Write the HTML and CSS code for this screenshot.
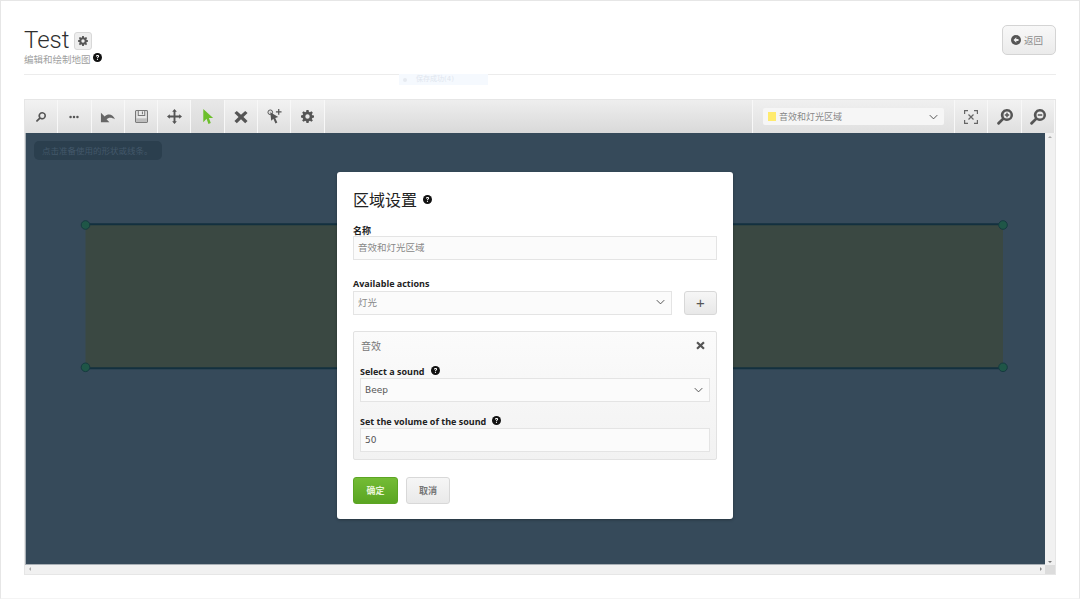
FILE: index.html
```html
<!DOCTYPE html>
<html lang="zh">
<head>
<meta charset="utf-8">
<title>Test</title>
<link rel="stylesheet" href="styles.css">
</head>
<body>
<svg class="defs" width="0" height="0">
  <defs>
    <symbol id="help" viewBox="0 0 16 16"><circle cx="8" cy="8" r="8" fill="#111"/><path d="M5.2 6.2C5.3 4.5 6.5 3.6 8.1 3.6c1.700 0 2.800 1 2.800 2.300 0 1.200-.7 1.700-1.500 2.300-.6.4-.8.700-.8 1.300H7c0-1.100.3-1.700 1.100-2.300.6-.4.9-.7.9-1.200 0-.5-.4-.8-.9-.8-.6 0-1 .4-1.100 1z" fill="#fff"/><rect x="7" y="10.500" width="1.800" height="1.800" fill="#fff"/></symbol>
    <symbol id="gear" viewBox="0 0 16 16"><path fill="#555" fill-rule="evenodd" d="M6.700 0h2.600l.4 2.200 1.300.5L12.800 1.500l1.800 1.800-1.300 1.800.6 1.300 2.100.3v2.600l-2.100.4-.6 1.300 1.300 1.800-1.800 1.800-1.800-1.300-1.300.6-.4 2.100H6.700l-.4-2.100-1.300-.6-1.800 1.300-1.800-1.800 1.300-1.800-.6-1.300L0 9.300V6.700l2.100-.4.6-1.300L1.400 3.300l1.800-1.800L5 2.700l1.300-.5zM8 5.300a2.700 2.700 0 1 0 0 5.400 2.700 2.700 0 0 0 0-5.400z"/></symbol>
    <symbol id="mag" viewBox="0 0 16 16"><path fill="#555" fill-rule="evenodd" d="M10 0a6 6 0 1 1-3.200 11.100L2.600 15.300a1.400 1.400 0 0 1-2-2l4.200-4.100A6 6 0 0 1 10 0zm0 2.500a3.500 3.500 0 1 0 0 7 3.500 3.500 0 0 0 0-7z"/></symbol>
    <symbol id="cross" viewBox="0 0 16 16"><path fill="#555" d="M3.200 1 8 5.500 12.800 1 15.500 3.500 10.800 8l4.700 4.500-2.700 2.500L8 10.500 3.200 15 .5 12.500 5.200 8 .5 3.500z"/></symbol>
    <symbol id="chev" viewBox="0 0 12 7"><path fill="none" stroke="#444" stroke-width="1.200" d="M1 1l5 5 5-5"/></symbol>
  </defs>
</svg>
<div class="page">
  <header class="head">
    <div class="head-text">
      <div class="title-row">
        <h1 class="title">Test</h1>
        <span class="gear-btn"><svg class="i12"><use href="#gear"/></svg></span>
      </div>
      <div class="sub-row">
        <span class="sub">编辑和绘制地图</span>
        <svg class="i9 up"><use href="#help"/></svg>
      </div>
    </div>
    <button class="back"><svg class="i10" viewBox="0 0 16 16"><circle cx="8" cy="8" r="8" fill="#555"/><path d="M8.500 3.500 4 8l4.500 4.500V9.700H12V6.300H8.500z" fill="#eee"/></svg>返回</button>
  </header>
  <div class="rule"></div>
  <div class="toast"><span class="toast-dot"></span>保存成功(4)</div>

  <section class="editor">
    <div class="toolbar">
      <button class="tool"><svg class="i11"><use href="#mag"/></svg></button>
      <button class="tool"><svg class="i12" viewBox="0 0 16 16"><circle cx="2.500" cy="8" r="2" fill="#555"/><circle cx="8" cy="8" r="2" fill="#555"/><circle cx="13.500" cy="8" r="2" fill="#555"/></svg></button>
      <button class="tool"><svg class="i15" viewBox="0 0 16 16"><path fill="#666" d="M1 4v10h9l-3-3c2-2 5-2.500 9 0-2-5-7-7-11-3z"/></svg></button>
      <button class="tool"><svg class="i13" viewBox="0 0 14 14"><rect x=".6" y=".6" width="12.800" height="12.800" rx="1" fill="none" stroke="#777" stroke-width="1.200"/><rect x="1.200" y="9" width="11.600" height="4" fill="#bdbdbd"/><path fill="none" stroke="#777" stroke-width="1.100" d="M3.500 1v5h7V1M8 1.500v3"/></svg></button>
      <button class="tool"><svg class="i15" viewBox="0 0 16 16"><path fill="#555" d="M8 0l2.500 3H9v4h4V5.500L16 8l-3 2.500V9H9v4h1.500L8 16l-2.500-3H7V9H3v1.500L0 8l3-2.500V7h4V3H5.500z"/></svg></button>
      <button class="tool tool-on"><svg class="i15" viewBox="0 0 16 16"><path fill="#6cbf2b" d="M3.500 0 14 9.500H9.500L11.500 15l-2.500 1-2-5.500L3.500 14z"/></svg></button>
      <button class="tool"><svg class="i14"><use href="#cross"/></svg></button>
      <button class="tool"><svg class="i15" viewBox="0 0 16 16"><circle cx="3.500" cy="3.500" r="2.500" fill="#ddd" stroke="#555" stroke-width="1"/><path fill="#555" d="M3.500 3.500 12 8.500 8.800 9.500 11 14.500 9 15.500 6.800 10.500 4.500 12.500z"/><path fill="none" stroke="#555" stroke-width="1.300" d="M12.500 0v6M9.500 3h6"/></svg></button>
      <button class="tool"><svg class="i13"><use href="#gear"/></svg></button>
      <div class="tool-fill"></div>
      <div class="layer-wrap">
        <div class="layer">
          <span class="swatch"></span>
          <span class="layer-name">音效和灯光区域</span>
          <svg class="chev"><use href="#chev"/></svg>
        </div>
      </div>
      <button class="tool"><svg class="i14" viewBox="0 0 14 14"><path fill="none" stroke="#666" stroke-width="1.200" d="M.6 4V.6H4M10 .6h3.400V4M13.400 10v3.400H10M4 13.400H.6V10"/><path fill="none" stroke="#666" stroke-width="1.200" d="M4.500 4.500l5 5M9.500 4.500l-5 5"/></svg></button>
      <button class="tool"><svg class="i16" viewBox="0 0 16 16"><use href="#mag"/><path stroke="#555" stroke-width="1.400" d="M7.800 6h4.400M10 3.800v4.400"/></svg></button>
      <button class="tool"><svg class="i16" viewBox="0 0 16 16"><use href="#mag"/><path stroke="#555" stroke-width="1.500" d="M7.800 6h4.400"/></svg></button>
    </div>
    <div class="viewport">
      <div class="canvas">
        <div class="hint">点击准备使用的形状或线条。</div>
        <svg class="shape" viewBox="0 0 940 160">
          <rect x="9.500" y="11.300" width="917.500" height="144" fill="#3a4842"/>
          <path d="M9.500 11.300H927M9.500 155.300H927" stroke="#13303f" stroke-width="2"/>
          <circle cx="9.500" cy="12" r="4.300" fill="#1f5647" stroke="#163a40"/>
          <circle cx="927" cy="12" r="4.300" fill="#1f5647" stroke="#163a40"/>
          <circle cx="9.500" cy="154.300" r="4.300" fill="#1f5647" stroke="#163a40"/>
          <circle cx="927" cy="154.300" r="4.300" fill="#1f5647" stroke="#163a40"/>
        </svg>
      </div>
      <div class="vbar"><span class="arrow-up"></span><span class="arrow-down"></span></div>
      <div class="hbar"><span class="arrow-left"></span><span class="arrow-right"></span></div>
      <div class="corner"></div>
    </div>
  </section>

  <div class="modal">
    <h2 class="modal-title">区域设置 <svg class="i9"><use href="#help"/></svg></h2>
    <label class="lbl lbl-name">名称</label>
    <div class="field cjk">音效和灯光区域</div>
    <label class="lbl lbl-actions">Available actions</label>
    <div class="add-row">
      <div class="field select cjk"><span>灯光</span><svg class="chev"><use href="#chev"/></svg></div>
      <button class="plus">+</button>
    </div>
    <div class="action">
      <div class="action-head"><span>音效</span><svg class="i9x"><use href="#cross"/></svg></div>
      <label class="lbl lbl-sound">Select a sound <svg class="i9 up"><use href="#help"/></svg></label>
      <div class="field select latin"><span>Beep</span><svg class="chev"><use href="#chev"/></svg></div>
      <label class="lbl lbl-vol">Set the volume of the sound <svg class="i9 up"><use href="#help"/></svg></label>
      <div class="field latin">50</div>
    </div>
    <div class="actions">
      <button class="ok">确定</button>
      <button class="cancel">取消</button>
    </div>
  </div>
</div>
</body>
</html>
```
FILE: styles.css
```css
* { box-sizing: border-box; }
html, body { margin: 0; padding: 0; }
body {
  width: 1080px;
  height: 599px;
  overflow: hidden;
  background: #fff;
  font-family: "DejaVu Sans", "Noto Sans CJK SC", sans-serif;
  color: #333;
}
.defs { position: absolute; }
svg { display: block; overflow: visible; flex: none; }
.page {
  position: relative;
  height: 599px;
  border: 1px solid #e6e6e6;
  border-bottom-color: #f4f4f4;
  padding: 0 23px 0 23px;
}
.head { display: flex; justify-content: space-between; align-items: flex-start; padding-top: 24px; height: 73px; }
.title-row { display: flex; align-items: center; gap: 5px; height: 30px; }
.title { margin: 0; font: 300 24px/30px Roboto, sans-serif; color: #2f2f2f; }
.gear-btn {
  width: 18px; height: 18px; margin-top: 2px; display: flex; align-items: center; justify-content: center;
  border: 1px solid #d8d8d8; border-radius: 3px; background: #eee;
}
.i12 { width: 10px; height: 10px; }
.i9 { width: 9px; height: 9px; display: inline-block; }
.up { margin-bottom: 3px; }
.i9x { width: 9px; height: 9px; }
.i10 { width: 10px; height: 10px; }
.i11 { width: 10px; height: 10px; }
.i13 { width: 13px; height: 13px; }
.i14 { width: 14px; height: 14px; }
.i15 { width: 15px; height: 15px; }
.i16 { width: 16px; height: 16px; }
.sub-row { display: flex; align-items: center; gap: 2px; margin-top: -2px; height: 12px; }
.sub { font: 9.500px/12px "Noto Sans CJK SC", sans-serif; color: #a0a0a0; }
.back {
  width: 54px; height: 30px; margin-right: 0; display: flex; align-items: center; padding: 0 0 0 8px; gap: 3px;
  border: 1px solid #d4d4d4; border-radius: 5px; background: linear-gradient(#f8f8f8, #ebebeb);
  font: 9.500px "Noto Sans CJK SC", sans-serif; color: #8a8a8a;
}
.rule { height: 1px; background: #ececec; }
.toast {
  position: absolute; left: 398px; top: 73px; width: 89px; height: 11px; display: flex; align-items: center; padding-left: 4px;
  background: #f5f9fe; color: #e0e6ee; font-size: 7px; line-height: 11px;
}
.toast-dot { width: 4px; height: 4px; border-radius: 50%; background: #e6eaf0; margin-right: 9px; }
.editor { margin-top: 24px; }
.toolbar {
  display: flex; height: 34px; background: linear-gradient(#f1f1f1, #dedede);
  border: 1px solid #e6e6e6; border-bottom: 0;
}
.tool {
  width: 33.300px; flex: none; height: 33px; padding: 0; border: 0; border-right: 1px solid #f8f8f8;
  background: linear-gradient(#f2f2f2, #dfdfdf);
  display: flex; align-items: center; justify-content: center;
}
.tool-on { background: linear-gradient(#e8e8e8, #dadada); }
.tool-fill { flex: 1; background: linear-gradient(#eeeeee, #d9d9d9); }
.layer-wrap {
  width: 203px; height: 33px; flex: none; padding: 8px 10px 0 10px;
  border-left: 1px solid #f8f8f8; border-right: 1px solid #f8f8f8;
  background: linear-gradient(#f0f0f0, #e0e0e0);
}
.layer {
  height: 17px; display: flex; align-items: center; padding: 0 6px 0 5px;
  background: #f6f6f6; border-radius: 2px; font: 9px "Noto Sans CJK SC", sans-serif; color: #888;
}
.swatch { width: 8px; height: 9px; background: #ffeb6e; margin-right: 3px; }
.layer-name { flex: 1; }
.chev { width: 9px; height: 6px; }
.viewport {
  display: grid; grid-template-columns: 1fr 10px; grid-template-rows: 432px 9px;
  border-left: 1px solid #e6e6e6; border-right: 1px solid #e6e6e6; border-bottom: 1px solid #e6e6e6;
  background: #f1f1f1;
}
.canvas {
  position: relative; background: #364a5a; border-left: 1px solid #a9b0b6; border-bottom: 1px solid #a9b0b6; overflow: hidden;
}
.hint {
  position: absolute; left: 8px; top: 8px; width: 128px; height: 19px; padding-left: 8px;
  background: #2b3f4e; border-radius: 5px; font: 8.500px/18px "Noto Sans CJK SC", sans-serif; color: #43586a;
}
.shape { position: absolute; left: 50px; top: 80px; width: 940px; height: 160px; }
.vbar { position: relative; background: #f1f1f1; }
.hbar { position: relative; background: #f1f1f1; }
.corner { background: #dcdcdc; }
.arrow-up, .arrow-down, .arrow-left, .arrow-right { position: absolute; width: 0; height: 0; border: 2px solid transparent; }
.arrow-up { left: 3px; top: 1px; border-bottom-color: #aaa; }
.arrow-down { left: 3px; bottom: 0; border-top-color: #777; }
.arrow-left { left: 2px; top: 2px; border-right-color: #aaa; }
.arrow-right { right: 1px; top: 2px; border-left-color: #888; }

.modal {
  position: absolute; left: 336px; top: 171px; width: 396px; height: 347px;
  padding: 16px 16px 0 16px; background: #fff; border-radius: 3px; box-shadow: 0 1px 3px rgba(0,0,0,.3);
}
.modal-title { margin: 0; height: 22px; display: flex; align-items: center; gap: 6px; font: 400 16px/22px "Noto Sans CJK SC", sans-serif; color: #222; }
.lbl { display: flex; align-items: center; font: 700 9px/12px "Open Sans", "Noto Sans CJK SC", sans-serif; color: #222; gap: 6px; }
.lbl-name { margin-top: 16px; height: 10px; }
.lbl-actions { margin-top: 18px; height: 12px; }
.lbl-sound { margin-top: 11px; height: 13px; }
.lbl-vol { margin-top: 13px; height: 13px; }
.field {
  height: 24px; display: flex; align-items: center; justify-content: space-between; padding: 0 4px;
  border: 1px solid #e4e4e4; background: #fbfbfb; font-size: 9px; color: #888;
}
.cjk { font: 9.500px "Noto Sans CJK SC", sans-serif; padding-bottom: 2px; }
.select { padding-right: 6px; }
.latin { color: #555; }
.add-row { display: flex; gap: 12px; margin-top: 1px; }
.add-row .select { flex: 1; }
.plus {
  width: 33px; height: 24px; padding: 0; border: 1px solid #d8d8d8; border-radius: 3px;
  background: linear-gradient(#f6f6f6, #e8e8e8); font: 15px/20px "Liberation Sans", sans-serif; color: #555;
}
.action {
  margin-top: 16px; height: 129px; padding: 5px 6px 0 6px; border: 1px solid #e2e2e2; border-radius: 2px; background: linear-gradient(#fbfbfb, #f2f2f2);
}
.action-head { display: flex; justify-content: space-between; align-items: center; height: 17px; padding: 0 5px 0 1px; font: 10px "Noto Sans CJK SC", sans-serif; color: #777; }
.actions { display: flex; gap: 8px; margin-top: 17px; }
.ok, .cancel { width: 45px; height: 27px; padding: 0; border-radius: 3px; font: 700 9px "Noto Sans CJK SC", sans-serif; }
.ok { border: 1px solid #5ca523; background: linear-gradient(#74bc35, #5aa522); color: #e8f5d8; }
.cancel { width: 44px; border: 1px solid #d8d8d8; background: linear-gradient(#f6f6f6, #e9e9e9); color: #777; }
```
